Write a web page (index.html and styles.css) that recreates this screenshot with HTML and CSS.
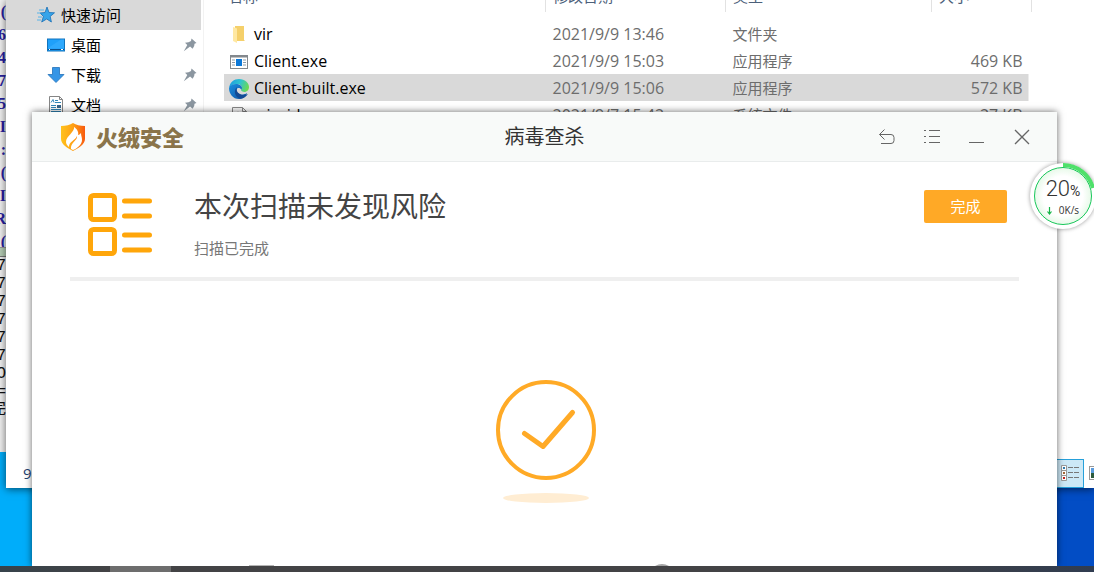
FILE: index.html
```html
<!DOCTYPE html>
<html lang="zh-CN">
<head>
  <meta charset="UTF-8">
  <meta name="viewport" content="width=device-width, initial-scale=1.0">
  <title>火绒安全 - 病毒查杀</title>
  <link rel="stylesheet" href="styles.css">
</head>
<body>
  <div class="desktop">

    <!-- editor window, mostly behind the explorer -->
    <div class="editor">
      <pre class="editor-code">(
6
4
7
5
I
:
(
I
R
(</pre>
      <div class="editor-split"></div>
      <pre class="editor-output">7
7
7
7
7
7
O
=
完</pre>
    </div>

    <!-- file explorer -->
    <div class="explorer">
      <div class="explorer-body">
        <nav class="sidebar">
          <a href="#" class="side-item side-root">
            <svg width="18" height="18" viewBox="0 0 18 18"><path d="M10 1l2 5.500 5.500.300-4.300 3.600 1.200 5.600-4.700-3-5 3 1.700-5.600L3 7l5-.500z" fill="#35a4ea" stroke="#1b6fb5" stroke-width=".8"/><path d="M2 4h5M0 7h4M1 11h4M0 14h4" stroke="#5ab4e8"/></svg>
            <span>快速访问</span>
          </a>
          <a href="#" class="side-item">
            <svg width="18" height="18" viewBox="0 0 18 18"><rect x=".5" y="3" width="17" height="12" fill="#1fa0fa" stroke="#1274bd"/><path d="M1 12L14 3.500h3v9H1z" fill="#3fb1ff" opacity=".5"/><path d="M1 13.500h16" stroke="#0a4f8c"/><path d="M2 13.500h1M14 13.500h2" stroke="#fff"/></svg>
            <span>桌面</span>
            <svg class="pin" width="14" height="14" viewBox="0 0 14 14"><path d="M8.500.500l5 4.500-2 .700-.300 2.300-1.600 2.800-2.500-2.400L.800 13.300l3.500-6.300L2 4.800l3.500-.500 2.500-1.300z" fill="#8b96a0"/></svg>
          </a>
          <a href="#" class="side-item">
            <svg width="18" height="18" viewBox="0 0 18 18"><path d="M5.500 1.500h7v7H17l-8 8-8-8h4.500z" fill="#3595e6" stroke="#2271b9" stroke-width=".8"/></svg>
            <span>下载</span>
            <svg class="pin" width="14" height="14" viewBox="0 0 14 14"><path d="M8.500.500l5 4.500-2 .700-.300 2.300-1.600 2.800-2.500-2.400L.800 13.300l3.500-6.300L2 4.800l3.500-.500 2.500-1.300z" fill="#8b96a0"/></svg>
          </a>
          <a href="#" class="side-item">
            <svg width="18" height="18" viewBox="0 0 18 18"><path d="M2.500.500h10l3 3v14h-13z" fill="#fff" stroke="#858585"/><path d="M12.500.500v3h3" fill="none" stroke="#858585"/><path d="M4 6.500l2-3 1 3M8 4.500h3M8 6.500h6M4 9.500h5M4 11.500h5M4 13.500h10M4 15.500h10" fill="none" stroke="#2f86b8"/><path d="M10 9h4v3h-4z" fill="#35648a"/></svg>
            <span>文档</span>
            <svg class="pin" width="14" height="14" viewBox="0 0 14 14"><path d="M8.500.500l5 4.500-2 .700-.300 2.300-1.600 2.800-2.500-2.400L.800 13.300l3.500-6.300L2 4.800l3.500-.500 2.500-1.300z" fill="#8b96a0"/></svg>
          </a>
        </nav>

        <div class="file-pane">
          <table class="files">
            <thead>
              <tr><th class="col-name">名称</th><th class="col-date">修改日期</th><th class="col-type">类型</th><th class="col-size">大小</th></tr>
            </thead>
            <tbody>
              <tr>
                <td class="name"><div class="file"><svg width="20" height="20" viewBox="0 0 20 20"><path d="M6 1h9v14l1 1H6z" fill="#f5d06b"/><path d="M4 2l4 1.500V18l-4-2z" fill="#ffe8a2"/></svg>vir</div></td>
                <td class="date">2021/9/9 13:46</td><td>文件夹</td><td></td>
              </tr>
              <tr>
                <td class="name"><div class="file"><svg width="20" height="20" viewBox="0 0 20 20"><rect x="1.500" y="3.500" width="17" height="13" fill="#fff" stroke="#83888d"/><path d="M1 4.500h18" stroke="#83888d" stroke-width="2"/><path d="M3 8h3M3 10.500h3M3 13h3M14 8h3M14 10.500h3M14 13h3" stroke="#8c9ba8"/><path d="M7 7h6v7H7z" fill="#0b78d8"/></svg>Client.exe</div></td>
                <td class="date">2021/9/9 15:03</td><td>应用程序</td><td class="size">469 KB</td>
              </tr>
              <tr class="selected">
                <td class="name"><div class="file"><svg width="20" height="20" viewBox="0 0 20 20">
                  <defs>
                    <linearGradient id="edge-top" x1="0" x2="1" y1=".3" y2=".6"><stop offset="0" stop-color="#1e9de0"/><stop offset=".5" stop-color="#2fc4cf"/><stop offset="1" stop-color="#6edb4d"/></linearGradient>
                    <linearGradient id="edge-side" x1="0" x2="1" y1="0" y2="1"><stop offset="0" stop-color="#1a8fe0"/><stop offset="1" stop-color="#0c4f9f"/></linearGradient>
                  </defs>
                  <path d="M0 9C1 3 5 0 10 0c6 0 10 4 10 8 0 3-2 5-5 5-2 0-3-1-3-2 0-.500 1-1 1-2 0-2-2-4-5-4-4 0-7 2-8 4z" fill="url(#edge-top)"/>
                  <path d="M0 9c1-3 4-4 7-4 3.500 0 6 2 6 4 0 1-1 1.500-1 2 0-2-3-3-4-1-2 4 3 8 10 4-1 4-5 6-8 6C4 20 0 15 0 9z" fill="url(#edge-side)"/>
                  <path d="M8 8c-4 4-2 10 3 11.500 3 .500 6-1.500 8-4.500-2 1-4 1.400-7 .500-4-1.500-5-4.500-4-7.500z" fill="#124a94"/>
                  <path d="M8.500 9.500c1-1 3 0 3.500 1.500 0 1 1 2 3 2 2 0 3-.500 4-1.500 0 2-2 3.500-5 3.500-4 0-6-3-5.500-5.500z" fill="#d9d9d9"/>
                </svg>Client-built.exe</div></td>
                <td class="date">2021/9/9 15:06</td><td>应用程序</td><td class="size">572 KB</td>
              </tr>
              <tr>
                <td class="name"><div class="file"><svg width="20" height="20" viewBox="0 0 20 20"><path d="M3.500 1.500h10l4 4V19h-14z" fill="#f8f8f8" stroke="#888"/><path d="M13.500 1.500v4h4" fill="none" stroke="#888"/><circle cx="9" cy="9" r="2.500" fill="none" stroke="#888" stroke-width="1.500"/></svg>winrid</div></td>
                <td class="date">2021/9/7 15:42</td><td>系统文件</td><td class="size">27 KB</td>
              </tr>
            </tbody>
          </table>
        </div>
      </div>

      <div class="statusbar">
        <span>9</span>
        <div class="view-buttons">
          <button class="view-btn active" aria-label="详细信息">
            <svg width="20" height="18" viewBox="0 0 20 18"><g fill="#fff" stroke="#999"><path d="M1.500 1.500h5v5h-5zM1.500 6.500h5v5h-5zM1.500 11.500h5v5h-5z"/></g><path d="M3 3h2v2H3z" fill="#327daf"/><path d="M3 8h2v2H3z" fill="#a4683a"/><path d="M3 13h2v2H3z" fill="#c3241f"/><path d="M8 3.500h5M14 3.500h5M8 8.500h5M14 8.500h5M8 13.500h5M14 13.500h5" stroke="#777"/></svg>
          </button>
          <button class="view-btn" aria-label="大图标">
            <svg width="20" height="18" viewBox="0 0 20 18"><rect x="1.500" y="2.500" width="17" height="13" fill="#fff" stroke="#999"/><path d="M3 4h14v10H3z" fill="#5a9bdc"/><path d="M3 9h14v5H3z" fill="#2d5a3c"/></svg>
          </button>
        </div>
      </div>
    </div>

    <!-- antivirus window -->
    <div class="scanner">
      <header class="titlebar">
        <div class="brand">
          <svg width="24" height="28" viewBox="0 0 24 28">
            <defs><linearGradient id="shield" x1="0" x2="1" y1="0" y2="0"><stop offset="0" stop-color="#ffc21c"/><stop offset=".5" stop-color="#ffa114"/><stop offset="1" stop-color="#f8590f"/></linearGradient></defs>
            <path d="M0 3C5 3 9 2 12 0c3 2 7 3 12 3v13c0 5-6 9-12 12C6 25 0 21 0 16z" fill="url(#shield)"/>
            <path d="M13 4c1 5-8 9-8 15 0 2 1 3 3 5 0-6 6-6 8-11 1 4-7 7-6 13l2 1c5-2 9-6 9-10 0-3-1-4-1-7-1 1-2 2-3 2 1-3-1-6-4-8z" fill="#fff"/>
          </svg>
          <span>火绒安全</span>
        </div>
        <h1 class="window-title">病毒查杀</h1>
        <div class="window-controls">
          <button aria-label="返回"><svg width="16" height="16" viewBox="0 0 16 16"><path d="M5.500.500l-5 5 5 5M.500 5.500H12a3 3 0 0 1 3 3v3a3 3 0 0 1-3 3H2"/></svg></button>
          <button aria-label="菜单"><svg width="16" height="16" viewBox="0 0 16 16"><path d="M0 1.500h2M5 1.500h11M0 7.500h2M5 7.500h11M0 13.500h2M5 13.500h11"/></svg></button>
          <button aria-label="最小化"><svg width="16" height="16" viewBox="0 0 16 16"><path d="M0 13.500h15"/></svg></button>
          <button aria-label="关闭"><svg width="16" height="16" viewBox="0 0 16 16"><path d="M1 1l14 14M15 1L1 15" stroke-width="1.300"/></svg></button>
        </div>
      </header>

      <section class="summary">
        <svg class="summary-icon" width="64" height="64" viewBox="0 0 64 64" fill="none" stroke="#ffa60a" stroke-width="5"><rect x="2.500" y="2.500" width="24" height="24" rx="3"/><rect x="2.500" y="36.500" width="24" height="24" rx="3"/><path d="M36.500 8h25M36.500 23h25M36.500 42h25M36.500 57h25" stroke-linecap="round"/></svg>
        <div class="summary-text">
          <h2>本次扫描未发现风险</h2>
          <p>扫描已完成</p>
        </div>
        <button class="done">完成</button>
      </section>

      <section class="result">
        <svg width="100" height="124" viewBox="0 0 100 124"><circle cx="50" cy="50" r="48" fill="none" stroke="#ffaa26" stroke-width="4"/><path d="M28.500 53.500L47 66.500 76.500 32.500" fill="none" stroke="#ffaa26" stroke-width="5" stroke-linecap="round" stroke-linejoin="round"/><ellipse cx="50" cy="118" rx="43" ry="5" fill="#ffedd3"/></svg>
      </section>

      <footer class="scanner-footer">
        <svg width="25" height="2" viewBox="0 0 25 2"><path d="M0 1h25v1H0z" fill="#b5b5b5"/></svg>
        <svg width="14" height="2" viewBox="0 0 14 2"><path d="M0 2q7-4 14 0z" fill="#a5a5a5"/></svg>
      </footer>
    </div>

    <!-- network speed ball -->
    <div class="speed-ball">
      <svg class="ball-arc" width="66" height="66" viewBox="0 0 66 66"><path d="M33 2a31 31 0 0 1 30 23" fill="none" stroke="#4fe06a" stroke-width="4"/></svg>
      <div class="ball-inner">
        <div class="percent">20<small>%</small></div>
        <div class="rate"><svg width="5" height="8" viewBox="0 0 5 8"><path d="M2.500 0v7M.500 4.500l2 2.500 2-2.500" fill="none" stroke="#12b545" stroke-width="1.200"/></svg>0K/s</div>
      </div>
    </div>

    <div class="taskbar">
      <div class="task-active"></div>
    </div>
  </div>
</body>
</html>
```
FILE: styles.css
```css
* {
  box-sizing: border-box;
}

body {
  margin: 0;
  font-family: "Open Sans", "Noto Sans CJK SC", sans-serif;
  font-size: 15px;
  color: #000;
}

button {
  border: none;
  padding: 0;
  background: none;
  font-family: inherit;
  cursor: pointer;
}

svg {
  display: block;
  flex-shrink: 0;
}

.desktop {
  position: relative;
  height: 100vh;
  overflow: hidden;
  background: linear-gradient(90deg, #00adfa 0%, #00adfa 30%, #024dc5 90%);
}

/* editor */
.editor {
  position: absolute;
  top: 0;
  left: 0;
  bottom: 120px;
  width: 6px;
  background: #f0f0f0;
  overflow: hidden;
}

.editor pre {
  display: flex;
  justify-content: flex-end;
  margin: 0;
  text-align: right;
}

.editor-code {
  height: 247px;
  font: bold 16px/23px "Liberation Serif", serif;
  color: #2a1fa0;
  overflow: hidden;
}

.editor-split {
  height: 10px;
  background: #b5cdb5;
  border-top: 1px solid #999;
  border-bottom: 1px solid #777;
}

.editor-output {
  font: 16px/18px "Liberation Mono", "Noto Sans CJK SC", monospace;
  color: #111;
}

/* explorer */
.explorer {
  position: absolute;
  top: 0;
  left: 6px;
  right: 0;
  bottom: 84px;
  display: flex;
  flex-direction: column;
  background: #fff;
  box-shadow: 0 1px 8px rgba(0, 0, 0, 0.6);
}

.explorer-body {
  flex: 1;
  display: flex;
  min-height: 0;
}

.sidebar {
  width: 198px;
  padding-right: 2px;
  border-right: 1px solid #f2f2f2;
}

.side-item {
  display: flex;
  align-items: center;
  gap: 6px;
  height: 30px;
  padding: 0 4px 0 41px;
  color: #000;
  text-decoration: none;
}

.side-item span {
  padding-bottom: 2px;
}

.side-root {
  padding-left: 31px;
  background: #d9d9d9;
}

.pin {
  margin-left: auto;
}

.file-pane {
  flex: 1;
  padding-left: 20px;
  padding-right: 62px;
  overflow: hidden;
}

.files {
  width: 100%;
  margin-top: -16px;
  border-collapse: collapse;
  table-layout: fixed;
  color: #6d6d6d;
}

.files th {
  height: 28px;
  padding: 0 0 4px 7px;
  border-right: 1px solid #e2e2e2;
  font-weight: normal;
  line-height: 24px;
  text-align: left;
  color: #4c607a;
}

.files .col-name {
  padding-left: 4px;
}

.files .col-date {
  width: 180px;
}

.files .col-type {
  width: 206px;
}

.files .col-size {
  width: 100px;
}

.files tbody::before {
  content: "";
  display: block;
  height: 8px;
}

.files td {
  height: 27px;
  padding: 2px 0 0 7px;
  line-height: 25px;
}

.files .name {
  padding-left: 5px;
  font-size: 16px;
  color: #000;
}

.files .date {
  font-size: 16px;
}

.files .size {
  padding-right: 9px;
  font-size: 16px;
  text-align: right;
}

.files .selected {
  background: linear-gradient(#d9d9d9, #d9d9d9) no-repeat;
  background-size: calc(100% - 4px) 100%;
}

.file {
  display: flex;
  align-items: center;
  gap: 5px;
}

.statusbar {
  display: flex;
  align-items: center;
  justify-content: space-between;
  height: 30px;
  padding-left: 17px;
  overflow: hidden;
  color: #22406f;
}

.view-buttons {
  display: flex;
  margin-right: -18px;
}

.view-btn {
  display: flex;
  align-items: center;
  justify-content: center;
  width: 28px;
  height: 29px;
  border: 1px solid transparent;
}

.view-btn.active {
  background: #cce8f6;
  border-color: #26a0da;
}

/* antivirus window */
.scanner {
  position: absolute;
  top: 112px;
  left: 32px;
  right: 37px;
  bottom: 6px;
  display: flex;
  flex-direction: column;
  background: #fff;
  box-shadow: 0 0 7px rgba(0, 0, 0, 0.6);
}

.titlebar {
  display: grid;
  grid-template-columns: 1fr auto 1fr;
  align-items: center;
  height: 50px;
  padding: 0 27px;
  background: #f8faf9;
  border-bottom: 1px solid #e9ecec;
}

.brand {
  display: flex;
  align-items: center;
  gap: 11px;
  padding-left: 2px;
  font-size: 22px;
  font-weight: 900;
  line-height: 30px;
  color: #8a744a;
}

.window-title {
  margin: 0;
  font-size: 20px;
  font-weight: normal;
  line-height: 30px;
  color: #333;
}

.window-controls {
  display: flex;
  justify-content: flex-end;
  gap: 29px;
}

.window-controls svg {
  fill: none;
  stroke: #666;
}

.summary {
  display: flex;
  align-items: flex-start;
  margin: 0 38px;
  padding: 23px 12px 18px 18px;
  border-bottom: 4px solid #efefef;
}

.summary-icon {
  margin-top: 8px;
}

.summary-text {
  flex: 1;
  margin-left: 42px;
}

.summary-text h2 {
  margin: 0;
  font-size: 28px;
  font-weight: normal;
  line-height: 42px;
  color: #444;
}

.summary-text p {
  margin: 10px 0 0;
  line-height: 22px;
  color: #777;
}

.done {
  width: 83px;
  height: 33px;
  margin-top: 5px;
  padding-bottom: 2px;
  border-radius: 2px;
  background: #ffa926;
  font-size: 15px;
  color: #fff;
}

.result {
  flex: 1;
  display: flex;
  justify-content: center;
  padding-top: 99px;
  padding-left: 2px;
}

.scanner-footer {
  display: flex;
  gap: 381px;
  padding-left: 217px;
}

/* speed ball */
.speed-ball {
  position: absolute;
  top: 163px;
  right: -2px;
  display: flex;
  align-items: center;
  justify-content: center;
  width: 66px;
  height: 66px;
  border-radius: 50%;
  background: #fff;
  box-shadow: 0 0 4px rgba(0, 0, 0, 0.4);
}

.ball-arc {
  position: absolute;
  top: 0;
  left: 0;
}

.ball-inner {
  width: 58px;
  height: 58px;
  padding-top: 9px;
  border: 1px solid #18c75a;
  border-radius: 50%;
  background: radial-gradient(#fff 50%, #c8f2cb 100%);
  text-align: center;
  color: #333;
}

.percent {
  font-family: Roboto, "Liberation Sans", sans-serif;
  font-size: 22px;
  font-weight: 300;
  line-height: 24px;
}

.percent small {
  font-size: 14px;
  font-weight: normal;
}

.rate {
  display: flex;
  align-items: center;
  justify-content: center;
  gap: 7px;
  font-size: 10px;
  line-height: 15px;
}

.taskbar {
  position: absolute;
  left: 0;
  right: 0;
  bottom: 0;
  height: 6px;
  padding-left: 110px;
  background: linear-gradient(90deg, #36434b, #434345 10%, #434345 80%, #303c50);
}

.task-active {
  width: 61px;
  height: 6px;
  background: #6d6d6d;
}
```
